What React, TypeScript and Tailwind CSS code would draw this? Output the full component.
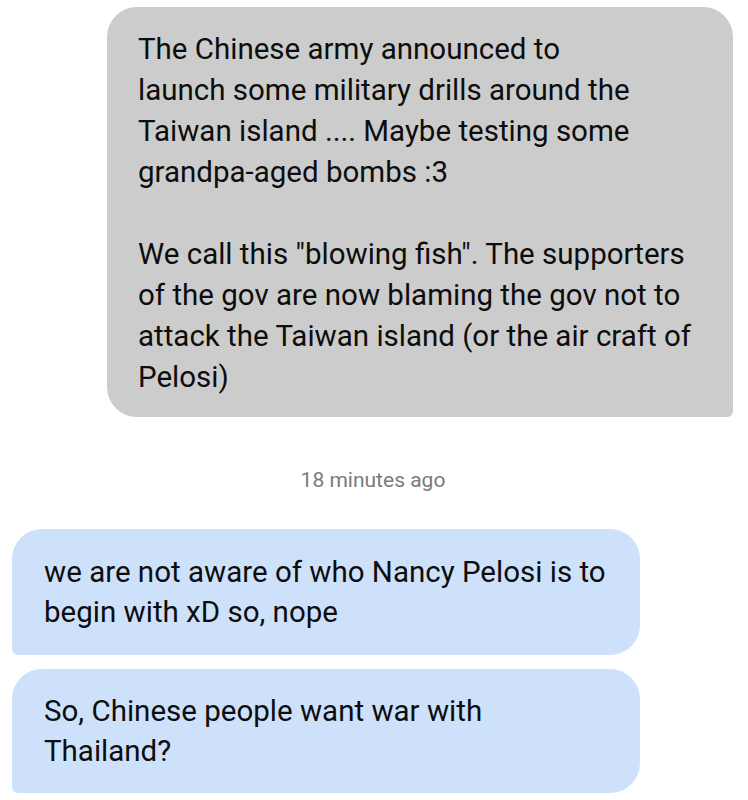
import React from "react";

export default function App() {
  const font = { fontFamily: "Roboto, 'Liberation Sans', sans-serif" };
  return (
    <div className="w-[748px] h-[800px] bg-white overflow-hidden" style={font}>
      <div className="pt-[7px] pl-[107px] pr-[15px]">
        <div className="bg-[#cccccc] rounded-[30px] rounded-br-[6px] pl-[31px] pr-[10px] pt-[22px] pb-[19px] text-[29.5px] leading-[41px] text-[#0d0d0d] whitespace-nowrap">
          <p>The Chinese army announced to<br />launch some military drills around the<br />Taiwan island .... Maybe testing some<br />grandpa-aged bombs :3</p>
          <p className="h-[41px]"></p>
          <p>We call this "blowing fish". The supporters<br />of the gov are now blaming the gov not to<br />attack the Taiwan island (or the air craft of<br />Pelosi)</p>
        </div>
      </div>
      <div className="mt-[51px] text-center text-[21px] text-[#7b7b7b] leading-[24px] pr-[2px]">18 minutes ago</div>
      <div className="mt-[37px] pl-[12px] pr-[108px] flex flex-col gap-[14px]">
        <div className="bg-[#cde1fb] rounded-[30px] rounded-bl-[6px] pl-[32px] pr-[10px] pt-[23px] pb-[23px] text-[29.5px] leading-[40px] text-[#0d0d0d] whitespace-nowrap">
          we are not aware of who Nancy Pelosi is to<br />begin with xD so, nope
        </div>
        <div className="bg-[#cde1fb] rounded-[30px] rounded-bl-[6px] pl-[32px] pr-[10px] pt-[22px] pb-[22px] text-[29.5px] leading-[40px] text-[#0d0d0d] whitespace-nowrap">
          So, Chinese people want war with<br />Thailand?
        </div>
      </div>
    </div>
  );
}
